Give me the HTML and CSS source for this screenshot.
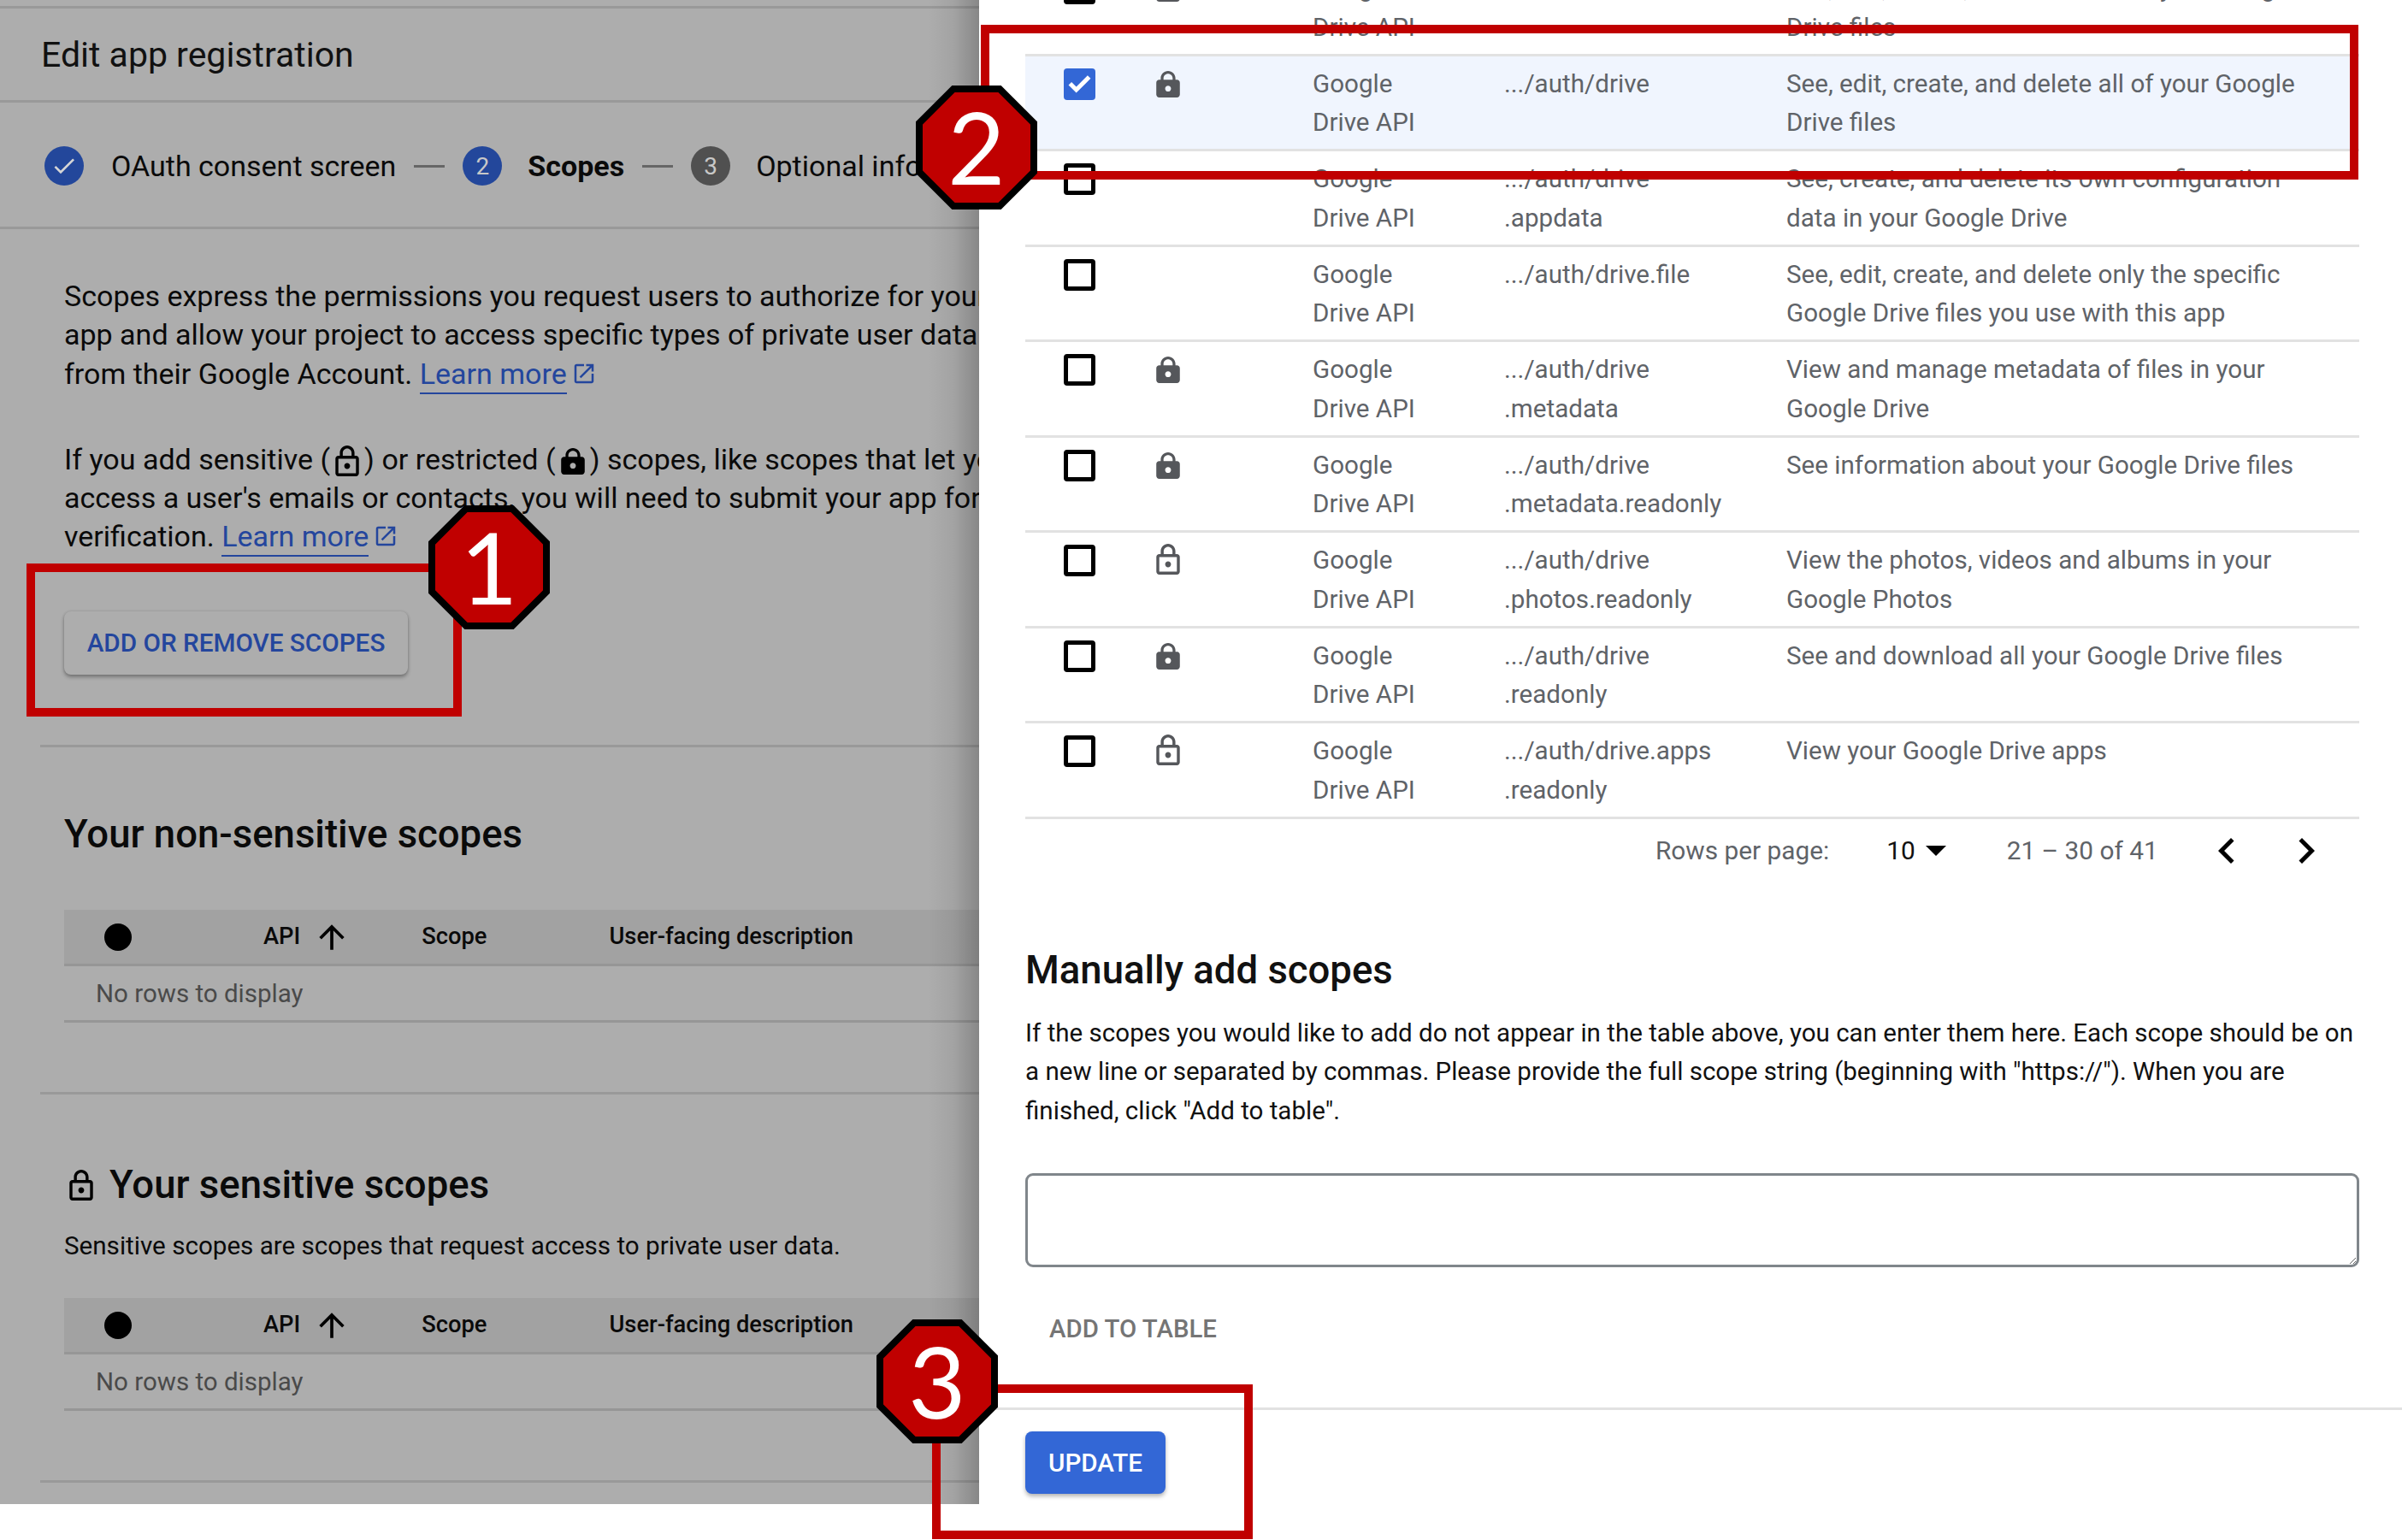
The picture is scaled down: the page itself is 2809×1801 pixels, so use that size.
FILE: index.html
```html
<!DOCTYPE html>
<html lang="en">
<head>
  <meta charset="UTF-8" />
  <meta name="viewport" content="width=device-width, initial-scale=1.0" />
  <title>Edit app registration</title>
  <link rel="stylesheet" href="styles.css">
</head>
<body>
<svg class="sprites" aria-hidden="true">
  <symbol id="lockFilled" viewBox="4 4 16 18">
    <path fill-rule="evenodd" d="M18 10h-1V9c0-2.76-2.24-5-5-5S7 6.24 7 9v1H6c-1.1 0-2 .9-2 2v8c0 1.1.9 2 2 2h12c1.1 0 2-.9 2-2v-8c0-1.1-.9-2-2-2zM15.1 10H8.9V9c0-1.71 1.39-3.1 3.1-3.1s3.1 1.39 3.1 3.1v1zM12 18c-1.1 0-2-.9-2-2s.9-2 2-2 2 .9 2 2-.9 2-2 2z"/>
  </symbol>
  <symbol id="lockOutline" viewBox="4 1 16 21">
    <path fill-rule="evenodd" d="M18 8h-1V6c0-2.76-2.24-5-5-5S7 3.24 7 6v2H6c-1.1 0-2 .9-2 2v10c0 1.1.9 2 2 2h12c1.1 0 2-.9 2-2V10c0-1.1-.9-2-2-2zM9 6c0-1.66 1.34-3 3-3s3 1.34 3 3v2H9V6zm9 14H6V10h12v10zm-6-3c1.1 0 2-.9 2-2s-.9-2-2-2-2 .9-2 2 .9 2 2 2z"/>
  </symbol>
  <symbol id="arrowUp" viewBox="0 0 24 24">
    <path d="M4 12l1.41 1.41L11 7.83V20h2V7.83l5.58 5.59L20 12l-8-8-8 8z"/>
  </symbol>
  <symbol id="openNew" viewBox="0 0 24 24">
    <path d="M19 19H5V5h7V3H5c-1.1 0-2 .9-2 2v14c0 1.1.9 2 2 2h14c1.1 0 2-.9 2-2v-7h-2v7zM14 3v2h3.59l-9.83 9.83 1.41 1.41L19 6.41V10h2V3h-7z"/>
  </symbol>
</svg>

<div class="stage">
  <!-- Page behind the drawer, dimmed -->
  <main class="page">
    <header class="page-title">Edit app registration</header>

    <div class="stepper">
      <span class="step-dot step-blue">
        <svg class="step-check" viewBox="0 0 24 24"><path d="M9 16.2L4.8 12l-1.4 1.4L9 19 21 7l-1.4-1.4z"/></svg>
      </span>
      <span class="step-label step-label-first">OAuth consent screen</span>
      <span class="step-dash"></span>
      <span class="step-dot step-blue">2</span>
      <span class="step-label step-current">Scopes</span>
      <span class="step-dash"></span>
      <span class="step-dot step-grey">3</span>
      <span class="step-label">Optional info</span>
    </div>

    <div class="intro">
      <p class="intro-text">
        Scopes express the permissions you request users to authorize for your<br>
        app and allow your project to access specific types of private user data<br>
        from their Google Account. <a class="learn-link" href="#">Learn more</a><svg class="link-icon"><use href="#openNew"/></svg>
      </p>
      <p class="intro-text">
        If you add sensitive (<svg class="inline-lock-open"><use href="#lockOutline"/></svg>) or restricted (<svg class="inline-lock"><use href="#lockFilled"/></svg>) scopes, like scopes that let you<br>
        access a user's emails or contacts, you will need to submit your app for<br>
        verification. <a class="learn-link" href="#">Learn more</a><svg class="link-icon"><use href="#openNew"/></svg>
      </p>
      <button class="btn-scopes" type="button">ADD OR REMOVE SCOPES</button>
    </div>

    <section class="scope-section section-plain">
      <h2 class="section-heading">Your non-sensitive scopes</h2>
      <div class="mini-head">
        <span class="mini-dot"></span>
        <span class="mini-api">API</span>
        <svg class="mini-arrow"><use href="#arrowUp"/></svg>
        <span class="mini-scope">Scope</span>
        <span>User-facing description</span>
      </div>
      <div class="mini-empty">No rows to display</div>
    </section>

    <section class="scope-section section-sensitive">
      <h2 class="section-heading"><svg class="heading-lock"><use href="#lockOutline"/></svg>Your sensitive scopes</h2>
      <p class="section-note">Sensitive scopes are scopes that request access to private user data.</p>
      <div class="mini-head">
        <span class="mini-dot"></span>
        <span class="mini-api">API</span>
        <svg class="mini-arrow"><use href="#arrowUp"/></svg>
        <span class="mini-scope">Scope</span>
        <span>User-facing description</span>
      </div>
      <div class="mini-empty">No rows to display</div>
    </section>
  </main>

  <!-- Update selected scopes drawer, scrolled down -->
  <aside class="drawer">
    <div class="drawer-body">
      <div class="scope-table">
        <div class="scope-row">
          <span class="checkbox"></span>
          <svg class="row-lock"><use href="#lockFilled"/></svg>
          <span>Google<br>Drive API</span>
          <span>.../auth/docs</span>
          <span>See, edit, create, and delete all of your Google<br>Drive files</span>
        </div>
        <div class="scope-row row-selected">
          <span class="checkbox checkbox-on">
            <svg viewBox="0 0 24 24"><path d="M9.5 18.5L3.6 12.6l2.3-2.3 3.6 3.6 8.6-8.6 2.3 2.3z"/></svg>
          </span>
          <svg class="row-lock"><use href="#lockFilled"/></svg>
          <span>Google<br>Drive API</span>
          <span>.../auth/drive</span>
          <span>See, edit, create, and delete all of your Google<br>Drive files</span>
        </div>
        <div class="scope-row">
          <span class="checkbox"></span>
          <span></span>
          <span>Google<br>Drive API</span>
          <span>.../auth/drive<br>.appdata</span>
          <span>See, create, and delete its own configuration<br>data in your Google Drive</span>
        </div>
        <div class="scope-row">
          <span class="checkbox"></span>
          <span></span>
          <span>Google<br>Drive API</span>
          <span>.../auth/drive.file</span>
          <span>See, edit, create, and delete only the specific<br>Google Drive files you use with this app</span>
        </div>
        <div class="scope-row">
          <span class="checkbox"></span>
          <svg class="row-lock"><use href="#lockFilled"/></svg>
          <span>Google<br>Drive API</span>
          <span>.../auth/drive<br>.metadata</span>
          <span>View and manage metadata of files in your<br>Google Drive</span>
        </div>
        <div class="scope-row">
          <span class="checkbox"></span>
          <svg class="row-lock"><use href="#lockFilled"/></svg>
          <span>Google<br>Drive API</span>
          <span>.../auth/drive<br>.metadata.readonly</span>
          <span>See information about your Google Drive files</span>
        </div>
        <div class="scope-row">
          <span class="checkbox"></span>
          <svg class="row-lock-open"><use href="#lockOutline"/></svg>
          <span>Google<br>Drive API</span>
          <span>.../auth/drive<br>.photos.readonly</span>
          <span>View the photos, videos and albums in your<br>Google Photos</span>
        </div>
        <div class="scope-row">
          <span class="checkbox"></span>
          <svg class="row-lock"><use href="#lockFilled"/></svg>
          <span>Google<br>Drive API</span>
          <span>.../auth/drive<br>.readonly</span>
          <span>See and download all your Google Drive files</span>
        </div>
        <div class="scope-row">
          <span class="checkbox"></span>
          <svg class="row-lock-open"><use href="#lockOutline"/></svg>
          <span>Google<br>Drive API</span>
          <span>.../auth/drive.apps<br>.readonly</span>
          <span>View your Google Drive apps</span>
        </div>
      </div>

      <div class="pager">
        <span class="pager-label">Rows per page:</span>
        <span class="pager-size">10</span>
        <span class="pager-caret"></span>
        <span class="pager-range">21 – 30 of 41</span>
        <svg class="pager-chevron pager-prev" viewBox="0 0 24 24"><path d="M15.41 7.41L14 6l-6 6 6 6 1.41-1.41L10.83 12z"/></svg>
        <svg class="pager-chevron" viewBox="0 0 24 24"><path d="M8.59 16.59L10 18l6-6-6-6-1.41 1.41L13.17 12z"/></svg>
      </div>

      <h2 class="manual-heading">Manually add scopes</h2>
      <p class="manual-text">
        If the scopes you would like to add do not appear in the table above, you can enter them here. Each scope should be on<br>
        a new line or separated by commas. Please provide the full scope string (beginning with "https://"). When you are<br>
        finished, click "Add to table".
      </p>
      <textarea class="manual-input"></textarea>
      <div class="add-table">ADD TO TABLE</div>
    </div>
    <div class="drawer-foot">
      <button class="btn-update" type="button">UPDATE</button>
    </div>
  </aside>
</div>

<!-- Red callouts drawn over the screenshot -->
<div class="frame frame-one"></div>
<div class="frame frame-two"></div>
<div class="frame frame-three"></div>

<svg class="badge badge-one" viewBox="0 0 142 145">
  <polygon class="badge-shape" points="44,4 98,4 138,44 138,101 98,141 44,141 4,101 4,44"/>
  <text class="badge-num" x="71" y="116">1</text>
</svg>
<svg class="badge badge-two" viewBox="0 0 142 145">
  <polygon class="badge-shape" points="44,4 98,4 138,44 138,101 98,141 44,141 4,101 4,44"/>
  <text class="badge-num" x="71" y="116">2</text>
</svg>
<svg class="badge badge-three" viewBox="0 0 142 145">
  <polygon class="badge-shape" points="44,4 98,4 138,44 138,101 98,141 44,141 4,101 4,44"/>
  <text class="badge-num" x="71" y="116">3</text>
</svg>
</body>
</html>
```

FILE: styles.css
```css
* {
  box-sizing: border-box;
}

html,
body {
  margin: 0;
  padding: 0;
  background-color: #fff;
}

body {
  position: relative;
  width: 2809px;
  height: 1801px;
  overflow: hidden;
  font-family: Roboto, "Liberation Sans", sans-serif;
  font-size: 29.6px;
  line-height: 45px;
  color: #000;
}

.sprites {
  display: none;
}

.stage {
  display: flex;
  height: 1801px;
  align-items: flex-start;
}

/* Dimmed page on the left */
.page {
  position: relative;
  flex: 0 0 1145px;
  height: 1759px;
  overflow: hidden;
  background-color: #adadad;
  padding-top: 7px;
  color: #0a0a0a;
}

.page::after {
  content: "";
  position: absolute;
  top: 0;
  right: 0;
  bottom: 0;
  width: 60px;
  background: linear-gradient(to right, rgba(0, 0, 0, 0), rgba(0, 0, 0, 0.06) 50%, rgba(0, 0, 0, 0.22));
}

.page-title {
  height: 113px;
  border-top: 3px solid #999;
  border-bottom: 3px solid #999;
  padding: 30px 0 0 48px;
  font-size: 41px;
  line-height: 48px;
  color: #111;
}

.stepper {
  display: flex;
  align-items: center;
  height: 148px;
  border-bottom: 3px solid #999;
  padding: 3px 0 0 52px;
  font-size: 34px;
  white-space: nowrap;
}

.step-dot {
  display: flex;
  flex: 0 0 46px;
  align-items: center;
  justify-content: center;
  width: 46px;
  height: 46px;
  border-radius: 50%;
  font-size: 28px;
  color: #c8c8c8;
}

.step-blue {
  background-color: #23479b;
}

.step-grey {
  background-color: #505050;
}

.step-check {
  width: 32px;
  height: 32px;
  fill: #d6d6d6;
}

.step-label {
  margin-left: 30px;
}

.step-label-first {
  margin-left: 32px;
}

.step-current {
  font-weight: 700;
}

.step-dash {
  width: 36px;
  height: 3px;
  margin: 0 21px;
  background-color: #666;
}

.intro {
  height: 603px;
  padding: 56px 0 0 75px;
  font-size: 34px;
  line-height: 45.3px;
  white-space: nowrap;
}

.intro-text {
  margin: 0 0 55px;
}

.learn-link {
  color: #24469d;
  text-decoration: none;
  border-bottom: 2px solid #24469d;
  padding-bottom: 2px;
}

.link-icon {
  width: 30px;
  height: 30px;
  margin-left: 5px;
  fill: #24469d;
  vertical-align: -3px;
}

.inline-lock-open {
  width: 28px;
  height: 36px;
  margin: 0 6px;
  vertical-align: -8px;
}

.inline-lock {
  width: 28px;
  height: 31px;
  margin: 0 6px;
  vertical-align: -6px;
}

.btn-scopes {
  display: block;
  width: 402px;
  height: 74px;
  margin-top: 64px;
  border: none;
  border-radius: 8px;
  background-color: #adadad;
  box-shadow: 0 3px 4px rgba(0, 0, 0, 0.3), 0 0 3px rgba(0, 0, 0, 0.15);
  font-family: inherit;
  font-size: 29.7px;
  font-weight: 500;
  color: #24469d;
}

.scope-section {
  margin-left: 47px;
  border-top: 3px solid #999;
  padding-left: 28px;
}

.section-plain {
  height: 406px;
  padding-top: 76px;
}

.section-sensitive {
  padding-top: 80px;
  border-bottom: 3px solid #999;
  height: 457px;
}

.section-heading {
  display: flex;
  align-items: center;
  margin: 0;
  height: 52px;
  font-size: 45.5px;
  line-height: 52px;
  font-weight: 500;
  white-space: nowrap;
  color: #0a0a0a;
}

.heading-lock {
  width: 28px;
  height: 36px;
  margin-right: 19px;
  margin-left: 6px;
}

.section-note {
  margin: 23px 0 38px;
  white-space: nowrap;
}

.section-plain .mini-head {
  margin-top: 62px;
}

.mini-head {
  display: flex;
  align-items: center;
  height: 66px;
  background-color: #a2a2a2;
  border-bottom: 3px solid #969696;
  padding-left: 47px;
  font-size: 27.3px;
  font-weight: 500;
  white-space: nowrap;
}

.mini-dot {
  flex: 0 0 32px;
  height: 32px;
  border-radius: 50%;
  background-color: #000;
}

.mini-api {
  margin-left: 154px;
}

.mini-arrow {
  width: 44px;
  height: 44px;
  margin-left: 15px;
}

.mini-scope {
  margin-left: 83px;
  margin-right: 143px;
}

.mini-empty {
  height: 66px;
  border-bottom: 3px solid #969696;
  padding: 10px 0 0 37px;
  color: #4a4a4a;
  font-size: 29.5px;
}

/* Drawer on the right */
.drawer {
  flex: 1;
  display: flex;
  flex-direction: column;
  height: 1801px;
  overflow: hidden;
}

.drawer-body {
  height: 1646px;
  padding: 0 50px 0 54px;
  border-bottom: 3px solid #e2e2e2;
  box-sizing: content-box;
}

.scope-table {
  margin-top: -46px;
  color: #5f6368;
}

.scope-row {
  display: grid;
  grid-template-columns: 153px 183px 224px 330px 1fr;
  height: 111.5px;
  padding-top: 10px;
  border-bottom: 3px solid #e2e2e2;
  line-height: 45.6px;
  white-space: nowrap;
}

.row-selected {
  background-color: #f0f5fe;
}

.checkbox {
  display: block;
  width: 37px;
  height: 37px;
  margin: 4px 0 0 45px;
  border: 5px solid #000;
  border-radius: 4px;
}

.checkbox-on {
  border: none;
  background-color: #3367d6;
}

.checkbox-on svg {
  display: block;
  width: 37px;
  height: 37px;
  fill: #fff;
}

.row-lock,
.row-lock-open {
  fill: #55575b;
  width: 28px;
}

.row-lock {
  height: 31px;
  margin-top: 7px;
}

.row-lock-open {
  height: 36px;
  margin-top: 3px;
}

.pager {
  display: flex;
  align-items: center;
  height: 76px;
  margin-top: -1px;
  padding-left: 737px;
  white-space: nowrap;
  color: #5f6368;
  font-size: 29.8px;
}

.pager-size {
  margin-left: 67px;
  color: #111;
}

.pager-caret {
  width: 0;
  height: 0;
  margin-left: 12px;
  border-left: 12px solid transparent;
  border-right: 12px solid transparent;
  border-top: 12px solid #000;
}

.pager-range {
  margin-left: 71px;
}

.pager-chevron {
  width: 60px;
  height: 60px;
  margin-left: 33px;
  fill: #000;
}

.pager-prev {
  margin-left: 50px;
}

.manual-heading {
  margin: 76px 0 0;
  height: 52px;
  font-size: 45.5px;
  line-height: 52px;
  font-weight: 500;
  color: #111;
}

.manual-text {
  margin: 25px 0 0;
  line-height: 45.5px;
  white-space: nowrap;
  color: #111;
  font-size: 29.55px;
}

.manual-input {
  display: block;
  width: 1560px;
  height: 110px;
  margin-top: 50px;
  border: 3px solid #80868b;
  border-radius: 9px;
  background-color: #fff;
}

.add-table {
  margin: 50px 0 0 28px;
  font-size: 29.4px;
  font-weight: 500;
  color: #757575;
}

.drawer-foot {
  padding: 25px 0 0 54px;
}

.btn-update {
  display: block;
  width: 164px;
  height: 73px;
  border: none;
  border-radius: 8px;
  background-color: #3367d6;
  box-shadow: 0 3px 5px rgba(0, 0, 0, 0.3);
  font-family: inherit;
  font-size: 29.6px;
  font-weight: 500;
  color: #fff;
}

/* Callouts */
.frame {
  position: absolute;
  border: 10px solid #c00000;
}

.frame-one {
  left: 31px;
  top: 659px;
  width: 509px;
  height: 179px;
}

.frame-two {
  left: 1147px;
  top: 29px;
  width: 1611px;
  height: 181px;
}

.frame-three {
  left: 1090px;
  top: 1619px;
  width: 375px;
  height: 181px;
}

.badge {
  position: absolute;
  width: 142px;
  height: 145px;
}

.badge-one {
  left: 501px;
  top: 591px;
}

.badge-two {
  left: 1071px;
  top: 100px;
}

.badge-three {
  left: 1025px;
  top: 1543px;
}

.badge-shape {
  fill: #c00000;
  stroke: #000;
  stroke-width: 8;
}

.badge-num {
  fill: #fff;
  font-family: Lato, "Open Sans", sans-serif;
  font-size: 116px;
  text-anchor: middle;
}
```
